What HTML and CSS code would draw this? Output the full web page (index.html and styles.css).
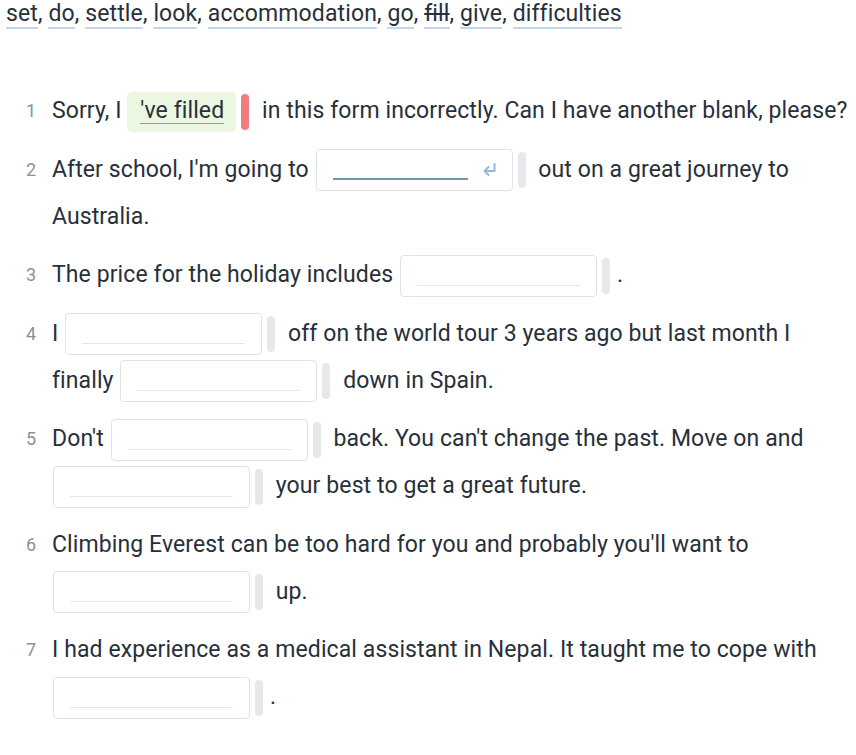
FILE: index.html
```html
<!DOCTYPE html>
<html lang="en">
<head>
<meta charset="utf-8">
<title>Exercise</title>
<link rel="stylesheet" href="styles.css">
</head>
<body>
<div class="bank">
  <span class="w">set</span>, <span class="w">do</span>, <span class="w">settle</span>, <span class="w">look</span>, <span class="w">accommodation</span>, <span class="w">go</span>, <span class="w used">fill</span>, <span class="w">give</span>, <span class="w">difficulties</span>
</div>
<ol class="items">
  <li class="item"><span class="num">1</span><p class="txt">Sorry, I <span class="filled"><span class="ans">'ve filled</span></span><span class="bar bad"></span> in this form incorrectly. Can I have another blank, please?</p></li>
  <li class="item"><span class="num">2</span><p class="txt">After school, I'm going to <span class="gap active"><span class="line"></span><svg class="enter" width="18" height="16" viewBox="0 0 18 16"><path d="M14.5 2v7H4.5M8.5 5 4.5 9 8.5 13" fill="none" stroke="#93b9e3" stroke-width="2" stroke-linecap="round" stroke-linejoin="round"/></svg></span><span class="bar"></span> out on a great journey to Australia.</p></li>
  <li class="item"><span class="num">3</span><p class="txt">The price for the holiday includes <span class="gap"><span class="line"></span></span><span class="bar"></span>.</p></li>
  <li class="item"><span class="num">4</span><p class="txt">I <span class="gap"><span class="line"></span></span><span class="bar"></span> off on the world tour 3 years ago but last month I finally <span class="gap"><span class="line"></span></span><span class="bar"></span> down in Spain.</p></li>
  <li class="item"><span class="num">5</span><p class="txt">Don't <span class="gap"><span class="line"></span></span><span class="bar"></span> back. You can't change the past. Move on and <span class="gap"><span class="line"></span></span><span class="bar"></span> your best to get a great future.</p></li>
  <li class="item"><span class="num">6</span><p class="txt">Climbing Everest can be too hard for you and probably you'll want to <span class="gap"><span class="line"></span></span><span class="bar"></span> up.</p></li>
  <li class="item"><span class="num">7</span><p class="txt">I had experience as a medical assistant in Nepal. It taught me to cope with <span class="gap"><span class="line"></span></span><span class="bar"></span>.</p></li>
</ol>
</body>
</html>
```
FILE: styles.css
```css
html, body {
  margin: 0;
  padding: 0;
  background: #ffffff;
}
body {
  font-family: Roboto, "Liberation Sans", sans-serif;
  color: #27303b;
  overflow: hidden;
}
.bank {
  padding: 2px 0 0 6px;
  font-size: 23px;
  letter-spacing: 0.12px;
  line-height: 24px;
  color: #27303b;
}
.w {
  display: inline-block;
  border-bottom: 2px solid #c3d5ee;
  border-radius: 1px;
  line-height: 24px;
  padding-bottom: 1px;
}
.w.used {
  text-decoration: line-through;
}
.items {
  list-style: none;
  margin: 58px 0 0 0;
  padding: 0;
}
.item {
  display: flex;
  margin-bottom: 11.5px;
}
.num {
  flex: 0 0 36px;
  text-align: right;
  font-size: 18px;
  line-height: 47px;
  color: #8c9199;
  padding-right: 16px;
}
.txt {
  margin: 0;
  font-size: 23px;
  letter-spacing: 0.1px;
  line-height: 47px;
  flex: 1;
}
.gap {
  display: inline-block;
  position: relative;
  box-sizing: border-box;
  width: 197px;
  height: 42px;
  vertical-align: middle;
  border: 1px solid #dfe2e6;
  border-radius: 4px;
  margin-left: 1px;
}
.line {
  position: absolute;
  left: 16px;
  right: 16px;
  bottom: 10px;
  height: 1px;
  background: #e3e6ea;
}
.gap.active .line {
  right: 44px;
  height: 2px;
  background: #6f97ad;
}
.enter {
  position: absolute;
  right: 14px;
  top: 12px;
}
.filled {
  display: inline-block;
  box-sizing: border-box;
  height: 40px;
  line-height: 38px;
  padding: 0 12px 0 13px;
  vertical-align: middle;
  background: #ebf7e0;
  border-radius: 5px;
}
.ans {
  border-bottom: 1px solid #7fb04e;
  line-height: 24px;
  display: inline-block;
}
.bar {
  display: inline-block;
  width: 8px;
  height: 36px;
  vertical-align: middle;
  background: #e6e8eb;
  border-radius: 4px;
  margin-left: 5px;
  margin-right: 7px;
}
.bar.bad {
  background: #f07c7c;
}
```
